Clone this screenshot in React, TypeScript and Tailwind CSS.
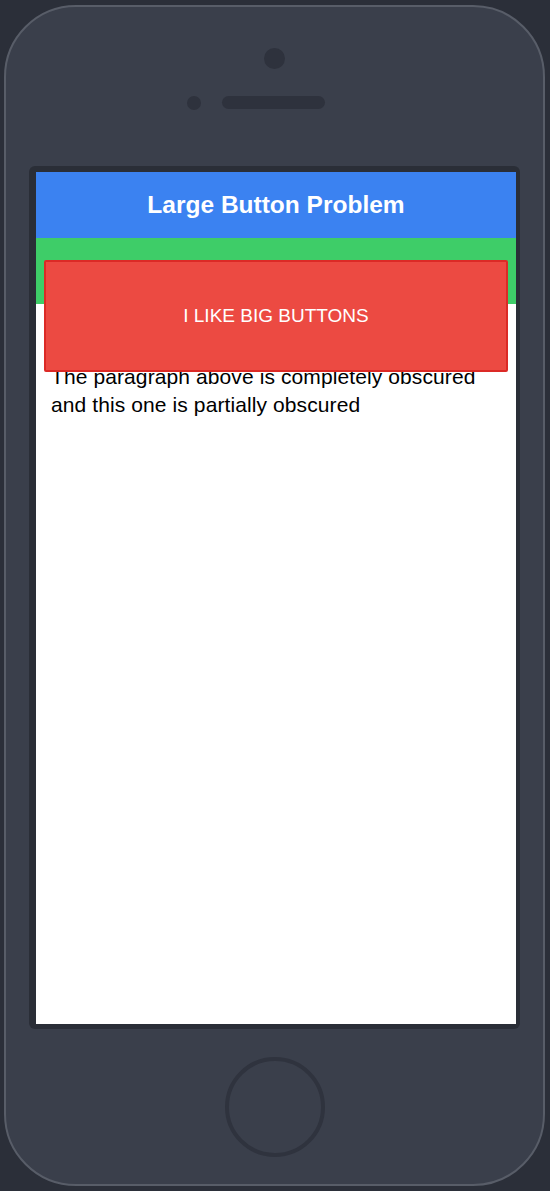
export default function App() {
  const font = { fontFamily: '"Liberation Sans", Arial, sans-serif' }

  return (
    <div className="w-full h-[1191px] bg-[#2b2f39] pt-[5px] pl-[4px]" style={font}>
      {/* phone body */}
      <div className="w-[541px] h-[1181px] rounded-[72px] border-2 border-[#585d68] bg-[#3a3f4b] flex flex-col items-center">
        {/* camera */}
        <div className="mt-[41px] w-[21px] h-[21px] rounded-full bg-[#2e323d]" />

        {/* sensor + speaker */}
        <div className="relative mt-[27px] w-[103px] h-[13px] rounded-full bg-[#2e323d] ml-[-3px]">
          <div className="absolute left-[-35px] top-[-0.5px] w-[14px] h-[14px] rounded-full bg-[#2e323d]" />
        </div>

        {/* screen bezel */}
        <div className="mt-[57px] w-[491px] h-[863px] rounded-[6px] bg-[#2a2e37] pt-[6px] pl-[7px] pr-[4px] pb-[5px]">
          <div className="relative w-[480px] h-[852px] bg-white overflow-hidden">
            <div className="h-[66px] bg-[#3b82f1] flex items-center justify-center">
              <h1 className="text-white text-[24.5px] font-bold">Large Button Problem</h1>
            </div>
            <div className="h-[66px] bg-[#3ecd68]" />
            <div className="px-[15px] pt-[59px]">
              <p className="text-black text-[21px] leading-[28px] tracking-[0.1px]">
                The paragraph above is completely obscured and this one is partially obscured
              </p>
            </div>

            {/* oversized button floating over the content */}
            <button
              type="button"
              className="absolute left-[8px] top-[88px] w-[464px] h-[112px] bg-[#ec4a42] border-2 border-[#dc2a26] rounded-[2px] text-white text-[19px] flex items-center justify-center"
            >
              I LIKE BIG BUTTONS
            </button>
          </div>
        </div>

        {/* home button */}
        <div className="mt-[28px] w-[100px] h-[100px] rounded-full border-4 border-[#2f333e]" />
      </div>
    </div>
  )
}
